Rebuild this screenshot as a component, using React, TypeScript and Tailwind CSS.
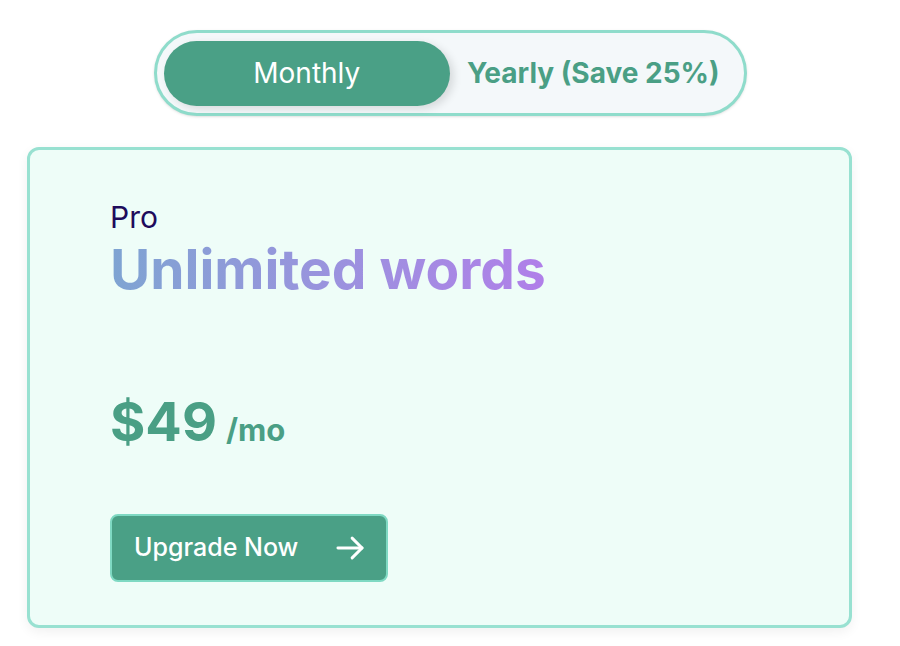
import React from "react";

export default function App() {
  return (
    <div className="min-h-[646px] w-[900px] bg-white" style={{ fontFamily: "Inter, 'Noto Sans', sans-serif" }}>
      <div className="flex justify-center pt-[30px]">
        <div className="flex h-[86px] w-[593px] items-center rounded-full border-[3px] border-[#8fdccb] bg-[#f4f8fa] px-[7px] shadow-sm">
          <div className="flex h-[65px] flex-1 items-center justify-center rounded-full bg-[#4aa086] text-[28px] text-white shadow-[4px_3px_8px_rgba(0,0,0,0.12)]">
            Monthly
          </div>
          <div className="flex h-[65px] flex-1 items-center justify-center text-[28px] font-bold text-[#4a9f85]">
            Yearly (Save 25%)
          </div>
        </div>
      </div>
      <div className="ml-[27px] mt-[31px] h-[481px] w-[825px] rounded-[12px] border-[3px] border-[#98e1d1] bg-[#eefdf8] pl-[80px] pt-[49px] shadow-[0_4px_12px_rgba(0,0,0,0.06)]">
        <div className="text-[30px] leading-[36px] text-[#1e0b5c]">Pro</div>
        <div className="mt-[1px] inline-block bg-gradient-to-r from-[#7ea4d2] to-[#b07fe9] bg-clip-text text-[55px] font-bold leading-[66px] text-transparent">
          Unlimited words
        </div>
        <div className="mt-[93px] flex items-baseline gap-[9px] text-[#4a9f85]">
          <span className="text-[54px] font-bold leading-[54px]">$49</span>
          <span className="text-[31px] font-bold leading-[31px]">/mo</span>
        </div>
        <button className="mt-[65px] flex h-[68px] w-[278px] items-center justify-between rounded-[8px] border-2 border-[#7fd9c3] bg-[#4aa086] pl-[22px] pr-[19px] text-[25px] font-medium text-white">
          <span>Upgrade Now</span>
          <svg width="34" height="34" viewBox="0 0 24 24" fill="none" stroke="currentColor" strokeWidth="2.1" strokeLinecap="round" strokeLinejoin="round">
            <path d="M3.5 12h17" />
            <path d="M13.5 5l7 7-7 7" />
          </svg>
        </button>
      </div>
    </div>
  );
}
